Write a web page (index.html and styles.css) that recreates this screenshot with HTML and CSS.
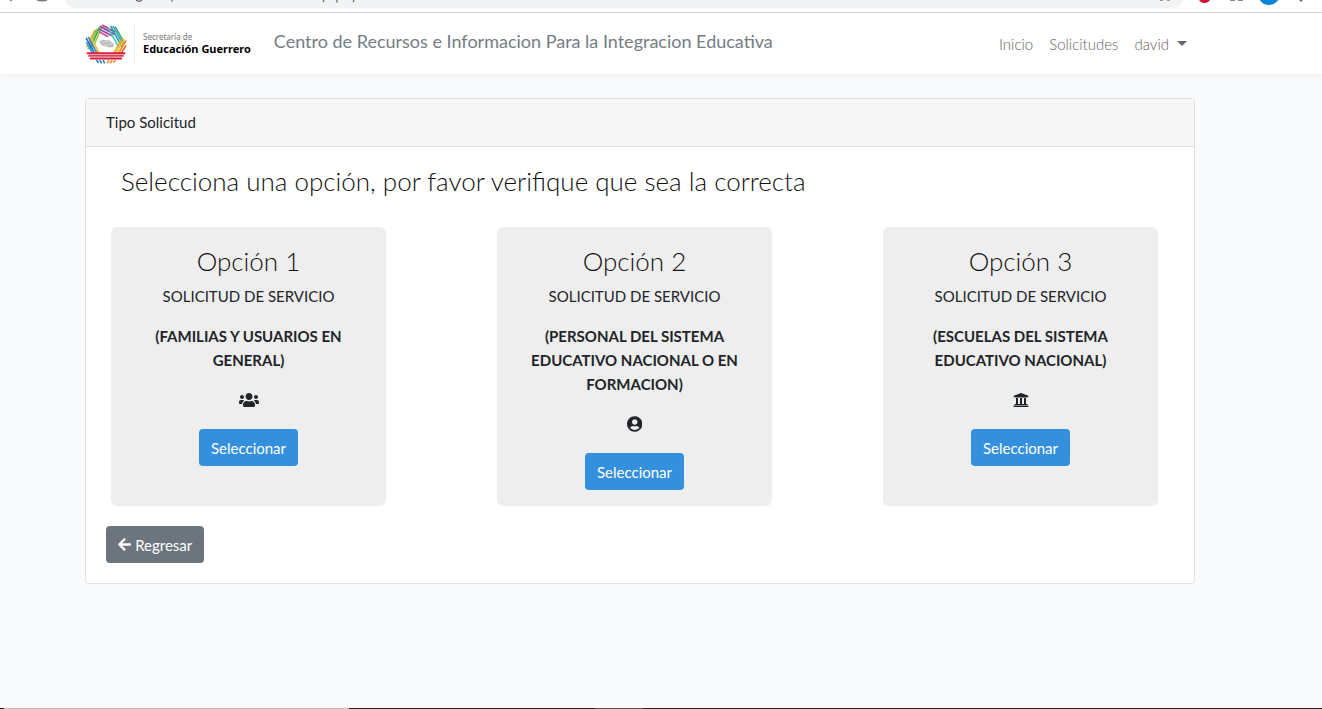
FILE: index.html
```html
<!DOCTYPE html>
<html lang="es">
<head>
<meta charset="utf-8">
<title>Tipo Solicitud</title>
<meta name="viewport" content="width=device-width, initial-scale=1">
<link rel="stylesheet" href="styles.css">
</head>
<body>
<div class="browser-bar" aria-hidden="true">
  <div class="browser-nav">
    <svg width="60" height="8" viewBox="0 0 60 8"><path d="M10 0l1.500 1M37 0q5 1.500 10 0" fill="none" stroke="#777" stroke-width="1.500"/></svg>
  </div>
  <div class="address">
    <svg width="340" height="8" viewBox="0 0 340 8"><path d="M70 0q3 2.500 6 0M106 0v1.500M258 0l-1 2M271 0v2.500M288 0l-1 2" fill="none" stroke="#666" stroke-width="1.300"/></svg>
    <svg width="26" height="8" viewBox="0 0 26 8"><path d="M4 0h3M11 0h3" stroke="#999" stroke-width="2"/></svg>
  </div>
  <div class="browser-tools">
    <svg width="140" height="8" viewBox="0 0 140 8"><path d="M17 0h11q-2 3-5.500 3T17 0" fill="#d2122e"/><path d="M48 0h5M56 0h5" stroke="#888" stroke-width="2"/><circle cx="87" cy="-6" r="11" fill="#0a84d6"/><circle cx="119" cy="0" r="1.500" fill="#666"/></svg>
  </div>
</div>
<header class="navbar">
  <a class="brand" href="#">
    <svg class="emblem" viewBox="6 8 126 122" aria-hidden="true">
      <g fill="none" stroke-width="5">
        <path d="M36 26L10 78" stroke="#f39a2b"/><path d="M42 22L14 84" stroke="#8cc63f"/><path d="M49 18L20 86" stroke="#35a95a"/><path d="M56 16L27 86" stroke="#9ccc3c"/>
        <path d="M8 50L34 98" stroke="#2a6fc0"/><path d="M9 63L28 98" stroke="#35a7df"/><path d="M15 47L42 98" stroke="#3c86d2"/><path d="M22 47L49 98" stroke="#f2c12e"/>
        <path d="M50 15L96 40" stroke="#7b3f9d"/><path d="M57 11L97 33" stroke="#c2338d"/><path d="M48 23L87 44" stroke="#8e4aa8"/><path d="M47 31L76 47" stroke="#d8488f"/>
        <path d="M83 14L117 78" stroke="#22a7a0"/><path d="M90 14L122 72" stroke="#3b9fd8"/><path d="M97 16L127 69" stroke="#3fb56b"/><path d="M76 20L108 79" stroke="#4cc3bf"/>
        <path d="M130 58L107 98" stroke="#f08a24"/><path d="M125 54L99 98" stroke="#f6c02c"/><path d="M130 73L115 98" stroke="#e9612d"/><path d="M118 54L92 98" stroke="#f3a52a"/>
      </g>
      <g fill="none" stroke-width="6">
        <path d="M10 97h118" stroke="#d9233f"/><path d="M15 105h108" stroke="#e43d52"/><path d="M20 113h98" stroke="#c81e3c"/>
      </g>
      <path d="M40 118l6 8M50 118l6 10M60 118l5 10" stroke="#3179c6" stroke-width="5"/>
      <path d="M98 118l-6 8M88 118l-6 10M78 118l-5 10" stroke="#ef8d2a" stroke-width="5"/>
      <path d="M48 61l12-6 10 3 8-2 7 8 9 5-4 9-12 2-9-5-9 1-8-7z" fill="#b9bbbd"/>
      <path d="M50 66l32-7M58 73l32-5" stroke="#e3e4e5" stroke-width="2"/>
    </svg>
    <span class="brand-text"><small>Secretaría de</small><strong>Educación Guerrero</strong></span>
  </a>
  <span class="site-title">Centro de Recursos e Informacion Para la Integracion Educativa</span>
  <nav class="menu">
    <a href="#">Inicio</a>
    <a href="#">Solicitudes</a>
    <button type="button" class="user">david</button>
  </nav>
</header>
<main class="page">
  <section class="card">
    <div class="card-header">Tipo Solicitud</div>
    <div class="card-body">
      <h1 class="heading">Selecciona una opción, por favor verifique que sea la correcta</h1>
      <div class="options">
        <article class="option">
          <h2>Opción 1</h2>
          <p>SOLICITUD DE SERVICIO</p>
          <p><b>(FAMILIAS Y USUARIOS EN GENERAL)</b></p>
          <svg class="icon" viewBox="0 0 640 512" aria-hidden="true"><path d="M96 224c35 0 64-29 64-64s-29-64-64-64-64 29-64 64 29 64 64 64zm448 0c35 0 64-29 64-64s-29-64-64-64-64 29-64 64 29 64 64 64zm32 32h-64c-18 0-34 7-45 19 40 22 69 62 75 109h66c18 0 32-14 32-32v-32c0-35-29-64-64-64zm-256 0c62 0 112-50 112-112S382 32 320 32 208 82 208 144s50 112 112 112zm77 32h-8c-21 10-44 16-69 16s-48-6-69-16h-8c-64 0-115 51-115 115v29c0 26 21 48 48 48h288c27 0 48-22 48-48v-29c0-64-51-115-115-115zm-224-13c-11-12-27-19-45-19H64c-35 0-64 29-64 64v32c0 18 14 32 32 32h66c6-47 35-87 75-109z"/></svg>
          <button type="button" class="btn btn-primary">Seleccionar</button>
        </article>
        <article class="option">
          <h2>Opción 2</h2>
          <p>SOLICITUD DE SERVICIO</p>
          <p><b>(PERSONAL DEL SISTEMA EDUCATIVO NACIONAL O EN FORMACION)</b></p>
          <svg class="icon" viewBox="0 0 496 512" aria-hidden="true"><path d="M248 8C111 8 0 119 0 256s111 248 248 248 248-111 248-248S385 8 248 8zm0 96c49 0 88 39 88 88s-39 88-88 88-88-39-88-88 39-88 88-88zm0 344c-59 0-111-27-146-69 18-35 55-59 98-59 8 0 22 8 48 8s40-8 48-8c43 0 80 24 98 59-35 42-87 69-146 69z"/></svg>
          <button type="button" class="btn btn-primary">Seleccionar</button>
        </article>
        <article class="option">
          <h2>Opción 3</h2>
          <p>SOLICITUD DE SERVICIO</p>
          <p><b>(ESCUELAS DEL SISTEMA EDUCATIVO NACIONAL)</b></p>
          <svg class="icon" viewBox="0 0 512 512" aria-hidden="true"><path d="M496 128v16a8 8 0 0 1-8 8h-24v12c0 7-5 12-12 12H60c-7 0-12-5-12-12v-12H24a8 8 0 0 1-8-8v-16a8 8 0 0 1 5-7l232-88a8 8 0 0 1 6 0l232 88a8 8 0 0 1 5 7zm-24 304H40c-13 0-24 11-24 24v16a8 8 0 0 0 8 8h464a8 8 0 0 0 8-8v-16c0-13-11-24-24-24zM96 192v192H60c-7 0-12 5-12 12v20h416v-20c0-7-5-12-12-12h-36V192h-64v192h-64V192h-64v192h-64V192H96z"/></svg>
          <button type="button" class="btn btn-primary">Seleccionar</button>
        </article>
      </div>
      <a class="btn btn-secondary" href="#"><svg class="arrow" viewBox="0 0 448 512" aria-hidden="true"><path d="M258 444l-22 22c-10 9-25 9-34 0L7 273c-9-10-9-25 0-34L202 46c9-10 24-10 34 0l22 22c9 10 9 25-1 34L136 216h288c13 0 24 11 24 24v32c0 13-11 24-24 24H136l121 114c10 9 10 24 1 34z"/></svg>Regresar</a>
    </div>
  </section>
</main>
<div class="taskbar" aria-hidden="true"></div>
</body>
</html>
```
FILE: styles.css
```css
* { box-sizing: border-box; }
body {
  margin: 0;
  min-height: 100vh;
  display: flex;
  flex-direction: column;
  background: #f8fafc;
  color: #212529;
  font: 400 15px/24px Lato, "Liberation Sans", sans-serif;
}
.browser-bar {
  display: flex;
  height: 13px;
  background: #fff;
  border-bottom: 1px solid #d4d5d7;
}
.browser-nav { width: 66px; }
.browser-bar svg { display: block; }
.address {
  flex: 1;
  display: flex;
  justify-content: space-between;
  height: 8px;
  background: #f1f3f4;
  border-radius: 0 0 12px 12px;
}
.browser-tools { width: 140px; }
.navbar {
  display: flex;
  align-items: center;
  height: 61px;
  padding: 0 127px 0 85px;
  background: #fff;
  box-shadow: 0 2px 4px rgba(0, 0, 0, 0.04);
}
.brand { display: flex; align-items: center; gap: 7px; color: #000; text-decoration: none; }
.emblem { width: 42px; height: 40px; }
.brand-text {
  display: flex;
  flex-direction: column;
  padding: 6px 0 8px 8px;
  border-left: 1px solid #eee;
  font-family: "Noto Sans", sans-serif;
}
.brand-text small { font-size: 8px; line-height: 12px; color: #777; }
.brand-text strong { font-size: 11px; line-height: 12px; }
.site-title {
  margin: 0 0 6px 23px;
  font-size: 18px;
  color: #747d85;
}
.menu { display: flex; gap: 16px; margin-left: auto; padding-right: 8px; }
.menu a, .user { color: #666; font-weight: 300; text-decoration: none; }
.user {
  display: flex;
  align-items: center;
  gap: 8px;
  padding: 0;
  border: 0;
  background: none;
  font: inherit;
  font-weight: 300;
}
.user::after {
  content: "";
  border: 5px solid transparent;
  border-top-color: #666;
  border-bottom: 0;
}
.page { padding: 24px 127px 0 85px; }
.card { background: #fff; border: 1px solid #dfdfdf; border-radius: 4px; }
.card-header {
  padding: 11px 20px 12px;
  background: #f7f7f7;
  border-bottom: 1px solid #dfdfdf;
  border-radius: 3px 3px 0 0;
}
.card-body { padding: 20px; }
.heading { margin: 0 0 32px 15px; font-size: 26px; line-height: 28px; font-weight: 300; color: #111; }
.options {
  display: grid;
  grid-template-columns: repeat(3, 1fr);
  gap: 111px;
  margin-bottom: 20px;
  padding: 0 16px 0 5px;
}
.option {
  display: flex;
  flex-direction: column;
  align-items: center;
  padding: 20px 16px 16px;
  background: #eee;
  border-radius: 6px;
  text-align: center;
}
.option h2 { margin: 0 0 9px; font-size: 26px; line-height: 28px; font-weight: 300; color: #111; }
.option p { margin: 0 0 16px; }
.icon { height: 16px; margin: 4px 0 21px; fill: #212529; }
.btn {
  display: inline-flex;
  align-items: center;
  height: 37px;
  padding: 0 12px;
  border: 0;
  border-radius: 4px;
  font: inherit;
  color: #fff;
  text-decoration: none;
}
.btn-primary { background: #3490dc; }
.btn-secondary { background: #6c757d; }
.arrow { height: 15px; margin-right: 4px; fill: #fff; }
.taskbar {
  height: 1px;
  margin-top: auto;
  background: linear-gradient(to right, #222 4px, #bbb 4px, #bbb 349px, #222 349px, #222 595px, #555 595px, #555 643px, #222 643px);
}
```
